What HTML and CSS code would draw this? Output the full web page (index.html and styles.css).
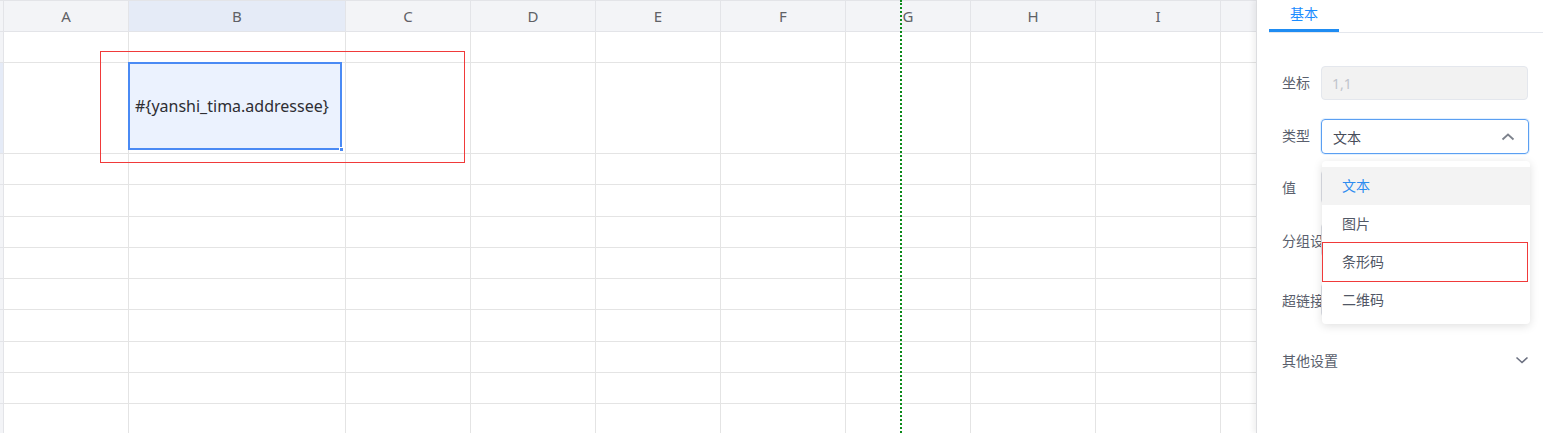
FILE: index.html
```html
<!DOCTYPE html>
<html lang="zh-CN">
<head>
<meta charset="utf-8">
<title>Report designer</title>
<link rel="stylesheet" href="styles.css">
</head>
<body>
<div class="app">
  <div class="sheet">
    <div class="grid">
      <div class="c rh hdr"></div>
      <div class="c hdr">A</div>
      <div class="c hdr sel-col">B</div>
      <div class="c hdr">C</div>
      <div class="c hdr">D</div>
      <div class="c hdr">E</div>
      <div class="c hdr">F</div>
      <div class="c hdr">G</div>
      <div class="c hdr">H</div>
      <div class="c hdr">I</div>
      <div class="c hdr last"></div>

      <div class="c rh"></div><div class="c"></div><div class="c"></div><div class="c"></div><div class="c"></div><div class="c"></div><div class="c"></div><div class="c"></div><div class="c"></div><div class="c"></div><div class="c last"></div>
      <div class="c rh sel-row"></div><div class="c"></div><div class="c"></div><div class="c"></div><div class="c"></div><div class="c"></div><div class="c"></div><div class="c"></div><div class="c"></div><div class="c"></div><div class="c last"></div>
      <div class="c rh"></div><div class="c"></div><div class="c"></div><div class="c"></div><div class="c"></div><div class="c"></div><div class="c"></div><div class="c"></div><div class="c"></div><div class="c"></div><div class="c last"></div>
      <div class="c rh"></div><div class="c"></div><div class="c"></div><div class="c"></div><div class="c"></div><div class="c"></div><div class="c"></div><div class="c"></div><div class="c"></div><div class="c"></div><div class="c last"></div>
      <div class="c rh"></div><div class="c"></div><div class="c"></div><div class="c"></div><div class="c"></div><div class="c"></div><div class="c"></div><div class="c"></div><div class="c"></div><div class="c"></div><div class="c last"></div>
      <div class="c rh"></div><div class="c"></div><div class="c"></div><div class="c"></div><div class="c"></div><div class="c"></div><div class="c"></div><div class="c"></div><div class="c"></div><div class="c"></div><div class="c last"></div>
      <div class="c rh"></div><div class="c"></div><div class="c"></div><div class="c"></div><div class="c"></div><div class="c"></div><div class="c"></div><div class="c"></div><div class="c"></div><div class="c"></div><div class="c last"></div>
      <div class="c rh"></div><div class="c"></div><div class="c"></div><div class="c"></div><div class="c"></div><div class="c"></div><div class="c"></div><div class="c"></div><div class="c"></div><div class="c"></div><div class="c last"></div>
      <div class="c rh"></div><div class="c"></div><div class="c"></div><div class="c"></div><div class="c"></div><div class="c"></div><div class="c"></div><div class="c"></div><div class="c"></div><div class="c"></div><div class="c last"></div>
      <div class="c rh"></div><div class="c"></div><div class="c"></div><div class="c"></div><div class="c"></div><div class="c"></div><div class="c"></div><div class="c"></div><div class="c"></div><div class="c"></div><div class="c last"></div>
      <div class="c rh"></div><div class="c"></div><div class="c"></div><div class="c"></div><div class="c"></div><div class="c"></div><div class="c"></div><div class="c"></div><div class="c"></div><div class="c"></div><div class="c last"></div>
    </div>
    <div class="selection"><span class="cell-text">#{yanshi_tima.addressee}</span><i class="handle"></i></div>
    <div class="mark-box"></div>
    <div class="page-break"></div>
  </div>

  <aside class="panel">
    <div class="tabs">
      <div class="tab active">基本</div>
    </div>
    <div class="form">
      <div class="row r-coord">
        <label class="lbl">坐标</label>
        <div class="input disabled">1,1</div>
      </div>
      <div class="row r-type">
        <label class="lbl">类型</label>
        <div class="input select focus">
          <span>文本</span>
          <svg class="arrow" width="14" height="10" viewBox="0 0 14 10"><path d="M1.5 7.5 L7 2.5 L12.5 7.5" fill="none" stroke="#7d828c" stroke-width="1.8"/></svg>
        </div>
      </div>
      <div class="row r-value">
        <label class="lbl">值</label>
        <div class="input"></div>
      </div>
      <div class="row r-group">
        <label class="lbl">分组设置</label>
        <div class="input"></div>
      </div>
      <div class="row r-link">
        <label class="lbl">超链接</label>
        <div class="input"></div>
      </div>
      <div class="row r-more">
        <span class="lbl wide">其他设置</span>
        <svg class="chev" width="14" height="10" viewBox="0 0 14 10"><path d="M1.5 2.5 L7 7.5 L12.5 2.5" fill="none" stroke="#6b7080" stroke-width="1.6"/></svg>
      </div>
    </div>

    <ul class="dropdown">
      <li class="opt hover">文本</li>
      <li class="opt">图片</li>
      <li class="opt">条形码</li>
      <li class="opt">二维码</li>
    </ul>
    <div class="opt-mark"></div>
  </aside>
</div>
</body>
</html>
```
FILE: styles.css
```css
* { box-sizing: border-box; }
html, body { margin: 0; padding: 0; }
body {
  width: 1543px;
  height: 433px;
  overflow: hidden;
  background: #fff;
  font-family: "Noto Sans", "Noto Sans CJK SC", sans-serif;
  color: #333;
}
.app {
  display: flex;
  height: 433px;
}
.sheet {
  position: relative;
  width: 1256px;
  height: 433px;
  overflow: hidden;
  flex: none;
}
.grid {
  display: grid;
  grid-template-columns: 4px 125px 217px 125px 125px 125px 125px 125px 125px 125px 35px;
  grid-template-rows: 31px 31px 91px 31px 32px 31px 31px 31px 32px 31px 31px 31px;
  border-top: 1px solid #e3e4e8;
}
.c {
  border-right: 1px solid #e4e4e4;
  border-bottom: 1px solid #e4e4e4;
}
.c.last { border-right: none; }
.hdr {
  background: #f3f4f7;
  border-color: #e3e4e8;
  display: flex;
  align-items: center;
  justify-content: center;
  font-size: 15px;
  color: #5f6166;
}
.hdr.sel-col { background: #e5ebf7; }
.rh { background: #f3f4f7; border-color: #e3e4e8; }
.rh.sel-row { background: #e5ebf7; }

.selection {
  position: absolute;
  left: 128px;
  top: 62px;
  width: 214px;
  height: 88px;
  border: 2px solid #4a8af4;
  background: #ebf2fe;
  display: flex;
  align-items: center;
  padding-left: 5px;
  padding-bottom: 1px;
}
.cell-text {
  font-size: 16px;
  color: #2e2e33;
  white-space: nowrap;
  letter-spacing: 0;
}
.handle {
  position: absolute;
  right: -4px;
  bottom: -4px;
  width: 3px;
  height: 3px;
  background: #4a8af4;
  border: 1px solid #fff;
  box-sizing: content-box;
}
.mark-box {
  position: absolute;
  left: 100px;
  top: 51px;
  width: 365px;
  height: 112px;
  border: 1px solid #f03a3a;
}
.page-break {
  position: absolute;
  left: 900px;
  top: 0;
  height: 433px;
  border-left: 2px dotted #0b8a1a;
}

.panel {
  position: relative;
  flex: 1;
  height: 433px;
  background: #fff;
  border-left: 1px solid #dcdde0;
  box-shadow: -3px 0 5px rgba(0,0,0,0.06);
}
.tabs {
  height: 33px;
  margin-left: 12px;
  border-bottom: 1px solid #e4e7ed;
  display: flex;
}
.tab {
  width: 70px;
  height: 32px;
  text-align: center;
  font-size: 14px;
  line-height: 28px;
  color: #1a8cff;
}
.tab.active { border-bottom: 3px solid #1f8cf2; }

.form {
  padding: 33px 14px 0 25px;
  display: flex;
  flex-direction: column;
}
.row {
  display: flex;
  align-items: center;
  height: 34px;
}
.r-coord .lbl { margin-top: -3px; }
.r-type { margin-top: 19px; height: 35px; }
.r-type .lbl { margin-top: -3px; }
.r-value { margin-top: 16px; }
.r-group { margin-top: 19px; }
.r-link { margin-top: 26px; }
.r-more { margin-top: 32px; height: 22px; justify-content: space-between; padding-right: 1px; }
.lbl {
  width: 39px;
  flex: none;
  font-size: 14px;
  color: #5a5f6d;
  white-space: nowrap;
}
.lbl.wide { width: auto; }
.input {
  flex: none;
  width: 207px;
  height: 100%;
  border: 1px solid #dcdfe6;
  border-radius: 4px;
  font-size: 14px;
  padding-left: 10px;
  display: flex;
  align-items: center;
  color: #474c59;
}
.input.disabled {
  background: #f2f2f2;
  border-color: #e4e7ed;
  color: #c0c4cc;
  width: 207px;
}
.input.select {
  width: 208px;
  justify-content: space-between;
  padding-right: 13px;
  padding-left: 11px;
}
.input.focus {
  border-color: #5b9ff2;
  box-shadow: 0 0 0 1px rgba(64,158,255,0.15);
}
.chev { margin-right: -1px; }

.dropdown {
  position: absolute;
  left: 65px;
  top: 161px;
  width: 208px;
  margin: 0;
  padding: 6px 0 5px;
  list-style: none;
  background: #fff;
  border-radius: 4px;
  box-shadow: 0 2px 10px rgba(0,0,0,0.13);
}
.opt {
  height: 38px;
  line-height: 38px;
  padding-left: 20px;
  font-size: 14px;
  color: #515766;
}
.opt.hover {
  background: #f3f3f3;
  color: #2d8cf0;
}
.opt-mark {
  position: absolute;
  left: 65px;
  top: 242px;
  width: 206px;
  height: 40px;
  border: 1px solid #f03a3a;
}
```
